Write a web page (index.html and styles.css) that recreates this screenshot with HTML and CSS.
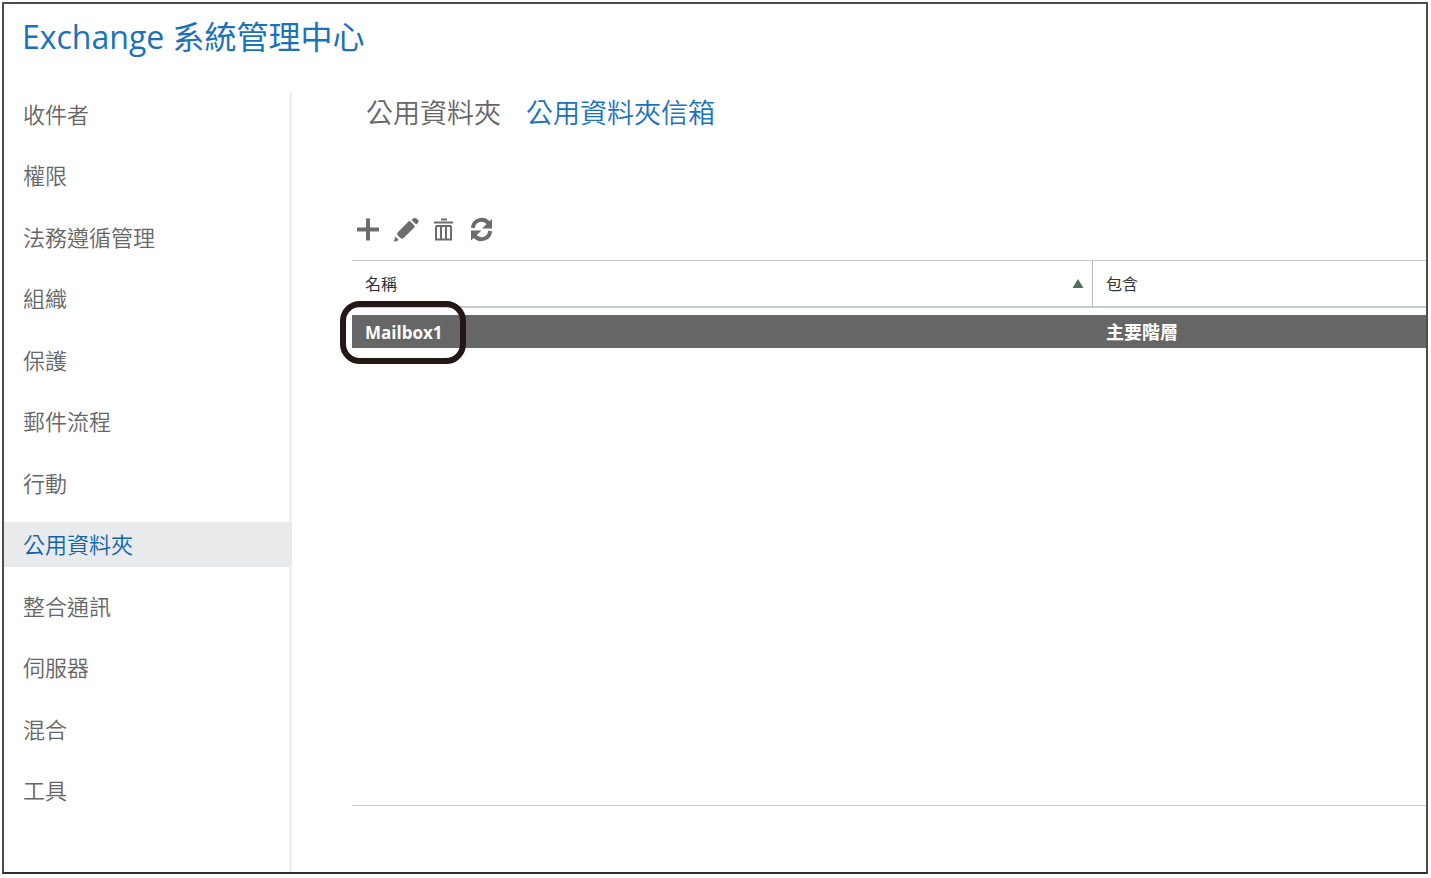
FILE: index.html
```html
<!DOCTYPE html>
<html lang="zh-Hant">
<head>
<meta charset="utf-8">
<title>Exchange 系統管理中心</title>
<link rel="stylesheet" href="styles.css">
</head>
<body>
<div class="window">
  <header class="header"><h1 class="title">Exchange 系統管理中心</h1></header>
  <div class="body">
    <nav class="nav">
      <a class="nav-item" href="#">收件者</a>
      <a class="nav-item" href="#">權限</a>
      <a class="nav-item" href="#">法務遵循管理</a>
      <a class="nav-item" href="#">組織</a>
      <a class="nav-item" href="#">保護</a>
      <a class="nav-item" href="#">郵件流程</a>
      <a class="nav-item" href="#">行動</a>
      <a class="nav-item current" href="#" aria-current="page">公用資料夾</a>
      <a class="nav-item" href="#">整合通訊</a>
      <a class="nav-item" href="#">伺服器</a>
      <a class="nav-item" href="#">混合</a>
      <a class="nav-item" href="#">工具</a>
    </nav>
    <main class="main">
      <div class="tabs">
        <a class="tab" href="#">公用資料夾</a>
        <a class="tab current" href="#" aria-current="page">公用資料夾信箱</a>
      </div>
      <div class="toolbar">
        <button class="tool" type="button" aria-label="新增">
          <svg viewBox="0 0 24 24"><path d="M1 11.500h22M12 .5v22" stroke="currentColor" stroke-width="4"/></svg>
        </button>
        <button class="tool" type="button" aria-label="編輯">
          <svg viewBox="0 0 24 24" fill="currentColor"><path d="M14.500 3.500q1-.8 2 0l3.800 4q.8 1 0 2L9.500 20q-1.500 1.200-2.800.2L3.400 17q-.8-1.200.4-2.800zM17.500 2 19.500.3q1.500-.6 3 .1l1.500 1.300q1.200 1.500.3 2.900L22.200 6.600zM1.500 18.500 4.800 22 2.800 23 .8 23.800 0 23z"/></svg>
        </button>
        <button class="tool" type="button" aria-label="刪除">
          <svg viewBox="0 0 24 24"><path d="M9 1.500h6M2 4.500h19" stroke="currentColor" stroke-width="2"/><path d="M4 8v13.500h15V8M4 8h15M9 8v13M14 8v13" fill="none" stroke="currentColor" stroke-width="2"/></svg>
        </button>
        <button class="tool" type="button" aria-label="重新整理">
          <svg viewBox="0 0 24 24"><path d="M2.800 10C4 1 14-.5 18.800 5.500M20.200 13C19 22 9 23.500 4.200 17.500" fill="none" stroke="currentColor" stroke-width="4"/><path d="M22 1v9.500H12zM1 22.500V12.500h10.500z" fill="currentColor"/></svg>
        </button>
      </div>
      <div class="list">
        <table class="table">
          <thead>
            <tr>
              <th class="name" scope="col"><button class="sort" type="button">名稱<svg class="arrow" viewBox="0 0 12 9"><path d="M6 0 11.500 9H.5z" fill="#52715a"/></svg></button></th>
              <th scope="col">包含</th>
            </tr>
          </thead>
          <tbody>
            <tr><td class="mailbox"><span class="marked">Mailbox1</span></td><td>主要階層</td></tr>
          </tbody>
        </table>
      </div>
    </main>
  </div>
</div>
</body>
</html>
```
FILE: styles.css
```css
*, *::after { box-sizing: border-box; }
body {
  margin: 0;
  padding: 2px 3px 4px 2px;
  background: #fff;
  color: #333;
  font-family: "Open Sans", "Noto Sans CJK TC", sans-serif;
}
a { color: inherit; text-decoration: none; }
button { padding: 0; border: 0; background: none; color: inherit; font: inherit; }
.window {
  display: flex;
  flex-direction: column;
  min-height: calc(100vh - 6px);
  border: 2px solid #514b4a;
  border-bottom-color: #332c2b;
}
.header { padding: 11px 18px 0; height: 88px; }
.title {
  margin: 0;
  color: #1b72b8;
  font-size: 32px;
  line-height: 44px;
  font-weight: 400;
}
.body { display: flex; flex: 1; }
.nav {
  display: flex;
  flex-direction: column;
  justify-content: space-between;
  flex: 0 0 288px;
  padding-bottom: 59px;
  border-right: 3px solid #f0f0f0;
}
.nav-item {
  margin-right: -3px;
  padding-left: 19px;
  color: #666;
  font-size: 22px;
  line-height: 45px;
  font-weight: 350;
}
.nav-item.current { background: #e9eaec; color: #0f65a8; }
.main {
  display: flex;
  flex-direction: column;
  flex: 1;
  min-width: 0;
  padding: 0 0 66px 60px;
}
.tabs {
  display: flex;
  gap: 25px;
  padding-left: 14px;
  color: #666;
  font-size: 27px;
  line-height: 42px;
  font-weight: 350;
}
.tab.current { color: #1b72b8; }
.toolbar {
  display: flex;
  gap: 14px;
  padding: 84px 0 18px 4px;
  color: #6c6c6c;
}
.tool { width: 24px; height: 24px; }
.tool svg { display: block; width: 24px; height: 24px; overflow: visible; }
.list { flex: 1; border-top: 1px solid #c5cccf; border-bottom: 1px solid #c5cccf; }
.table {
  width: 100%;
  table-layout: fixed;
  border-collapse: separate;
  border-spacing: 0;
  text-align: left;
}
.table th {
  height: 47px;
  padding: 0 13px;
  border-bottom: 2px solid #c5cccf;
  font-size: 16px;
  line-height: 24px;
  font-weight: 400;
}
.table .name { width: 69%; padding-right: 8px; border-right: 1px solid #b4b8ba; }
.sort { display: flex; align-items: center; justify-content: space-between; width: 100%; }
.arrow { width: 12px; height: 9px; }
.table td {
  height: 40px;
  padding: 2px 13px 0;
  border-top: 7px solid transparent;
  background: #666 padding-box;
  color: #fff;
  font-size: 18px;
  line-height: 31px;
  font-weight: 700;
}
.table .mailbox { font-size: 17px; }
.marked { position: relative; display: block; }
.marked::after {
  content: "";
  position: absolute;
  top: -16px;
  left: -25px;
  width: 126px;
  height: 63px;
  border: 6px solid #231815;
  border-radius: 20px;
}
```
